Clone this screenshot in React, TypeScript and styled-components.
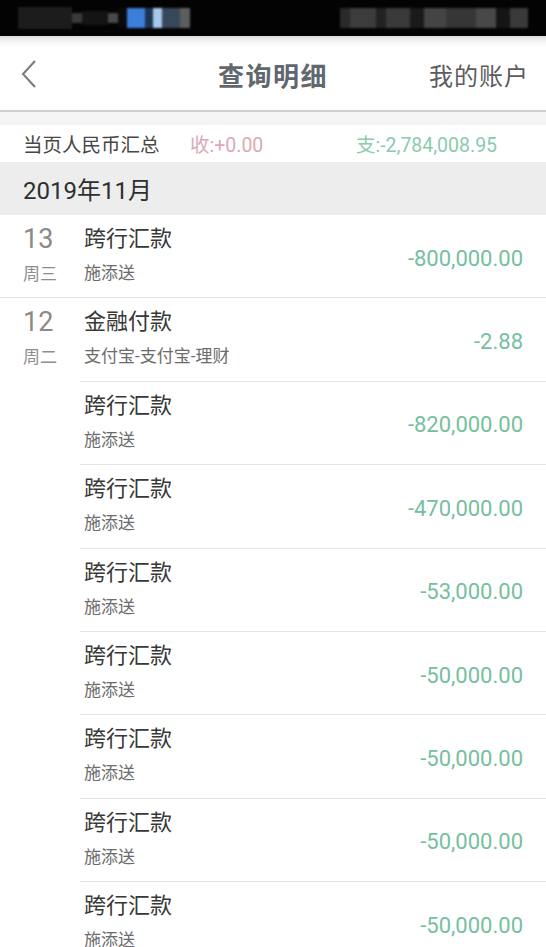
import React from 'react';
import styled, { createGlobalStyle } from 'styled-components';

const GlobalStyle = createGlobalStyle`
  html, body {
    margin: 0;
    padding: 0;
    background: #ffffff;
  }
  body {
    font-family: Roboto, "Noto Sans CJK SC", sans-serif;
    width: 546px;
    overflow: hidden;
  }
`;

const Page = styled.div`
  width: 546px;
  height: 947px;
  overflow: hidden;
  background: #fff;
`;

const StatusBar = styled.div`
  height: 36px;
  background: #030303;
  display: flex;
  align-items: center;
  justify-content: space-between;
  padding: 0 18px;
  overflow: hidden;
`;

const BlockGroup = styled.div`
  display: flex;
  align-items: center;
  height: 22px;
  filter: blur(1.2px);
`;

const Block = styled.span<{ $w: number; $c: string; $h?: number }>`
  display: block;
  width: ${(p) => p.$w}px;
  height: ${(p) => p.$h ?? 20}px;
  background: ${(p) => p.$c};
`;

const Header = styled.header`
  height: 76px;
  display: flex;
  align-items: center;
  justify-content: space-between;
  padding: 2px 17px 0 20px;
  box-sizing: border-box;
  background: linear-gradient(#dcdcdc 0, #f6f6f6 6px, #ffffff 12px);
  border-bottom: 2px solid #cfcfcf;
  position: relative;
`;

const BackButton = styled.div`
  width: 22px;
  height: 32px;
  display: flex;
  align-items: center;
`;

const Title = styled.h1`
  position: absolute;
  left: 0;
  right: 0;
  margin: 0;
  text-align: center;
  font-size: 26px;
  font-weight: 700;
  color: #60676d;
  letter-spacing: 1.5px;
  pointer-events: none;
`;

const HeaderLink = styled.span`
  font-size: 24px;
  color: #5c5c5c;
  letter-spacing: 1px;
`;

const Spacer = styled.div`
  height: 13px;
  background: #f5f5f5;
`;

const Summary = styled.div`
  height: 37px;
  display: grid;
  grid-template-columns: 167px 166px 1fr;
  align-items: center;
  padding-left: 23px;
  font-size: 19.5px;
  background: #fff;
`;

const SumLabel = styled.span`
  color: #474747;
`;

const SumValue = styled.span<{ $c: string }>`
  color: ${(p) => p.$c};
`;

const MonthBar = styled.div`
  height: 53px;
  display: flex;
  align-items: center;
  padding-left: 23px;
  background: #ededed;
  font-size: 24px;
  color: #2f2f2f;
`;

const DayGroup = styled.div`
  display: flex;
  border-bottom: 1px solid #e6e6e6;
`;

const DayCol = styled.div`
  width: 57px;
  padding: 8px 0 0 23px;
  flex-shrink: 0;
  display: flex;
  flex-direction: column;
`;

const DayNum = styled.span`
  font-size: 27px;
  line-height: 32px;
  color: #8a8a8a;
`;

const WeekDay = styled.span`
  font-size: 17px;
  line-height: 26px;
  margin-top: 6px;
  color: #8e8e8e;
`;

const Items = styled.div`
  flex: 1;
  display: flex;
  flex-direction: column;
`;

const Item = styled.div`
  height: 83.4px;
  box-sizing: border-box;
  display: flex;
  align-items: center;
  justify-content: space-between;
  padding: 4px 23px 0 4px;
  border-bottom: 1px solid #e6e6e6;
  &:last-child {
    border-bottom: none;
    height: 82.4px;
  }
`;

const ItemText = styled.div`
  display: flex;
  flex-direction: column;
  align-self: flex-start;
  padding-top: 4px;
`;

const ItemTitle = styled.span`
  font-size: 22px;
  line-height: 32px;
  color: #383838;
`;

const ItemSub = styled.span`
  font-size: 17px;
  line-height: 26px;
  margin-top: 5px;
  color: #6c6c6c;
`;

const Amount = styled.span`
  font-size: 22px;
  color: #76bf9e;
`;

type Entry = { title: string; sub: string; amount: string };
type Group = { day: string; week: string; entries: Entry[] };

const remit = (amount: string): Entry => ({ title: '跨行汇款', sub: '施添送', amount });

const groups: Group[] = [
  { day: '13', week: '周三', entries: [remit('-800,000.00')] },
  {
    day: '12',
    week: '周二',
    entries: [
      { title: '金融付款', sub: '支付宝-支付宝-理财', amount: '-2.88' },
      remit('-820,000.00'),
      remit('-470,000.00'),
      remit('-53,000.00'),
      remit('-50,000.00'),
      remit('-50,000.00'),
      remit('-50,000.00'),
      remit('-50,000.00'),
    ],
  },
];

const App = () => {
  return (
    <Page>
      <GlobalStyle />
      <StatusBar>
        <BlockGroup>
          <Block $w={54} $c="#1c1c1c" $h={22} />
          <Block $w={10} $c="#3a3a3a" $h={10} />
          <Block $w={26} $c="#141414" $h={14} />
          <Block $w={10} $c="#4a4a4a" $h={10} />
          <Block $w={9} $c="#0a0a0a" />
          <Block $w={18} $c="#3b7fdb" />
          <Block $w={8} $c="#1d3550" />
          <Block $w={9} $c="#a9c9ea" />
          <Block $w={18} $c="#37485a" />
          <Block $w={10} $c="#5d5d5d" />
        </BlockGroup>
        <BlockGroup>
          <Block $w={10} $c="#2a2a2a" />
          <Block $w={26} $c="#3c3c3c" />
          <Block $w={10} $c="#222" />
          <Block $w={24} $c="#3a3a3a" />
          <Block $w={14} $c="#1a1a1a" />
          <Block $w={22} $c="#444" />
          <Block $w={30} $c="#363636" />
          <Block $w={20} $c="#484848" />
          <Block $w={14} $c="#151515" />
          <Block $w={18} $c="#3a3a3a" />
        </BlockGroup>
      </StatusBar>
      <Header>
        <BackButton>
          <svg width="18" height="30" viewBox="0 0 18 30">
            <polyline points="15,2 3,15 15,28" fill="none" stroke="#7a7a7a" strokeWidth="2" />
          </svg>
        </BackButton>
        <Title>查询明细</Title>
        <HeaderLink>我的账户</HeaderLink>
      </Header>
      <Spacer />
      <Summary>
        <SumLabel>当页人民币汇总</SumLabel>
        <SumValue $c="#dba9b3">收:+0.00</SumValue>
        <SumValue $c="#8ccaae">支:-2,784,008.95</SumValue>
      </Summary>
      <MonthBar>2019年11月</MonthBar>
      {groups.map((g) => (
        <DayGroup key={g.day}>
          <DayCol>
            <DayNum>{g.day}</DayNum>
            <WeekDay>{g.week}</WeekDay>
          </DayCol>
          <Items>
            {g.entries.map((e, i) => (
              <Item key={i}>
                <ItemText>
                  <ItemTitle>{e.title}</ItemTitle>
                  <ItemSub>{e.sub}</ItemSub>
                </ItemText>
                <Amount>{e.amount}</Amount>
              </Item>
            ))}
          </Items>
        </DayGroup>
      ))}
    </Page>
  );
};

export default App;
